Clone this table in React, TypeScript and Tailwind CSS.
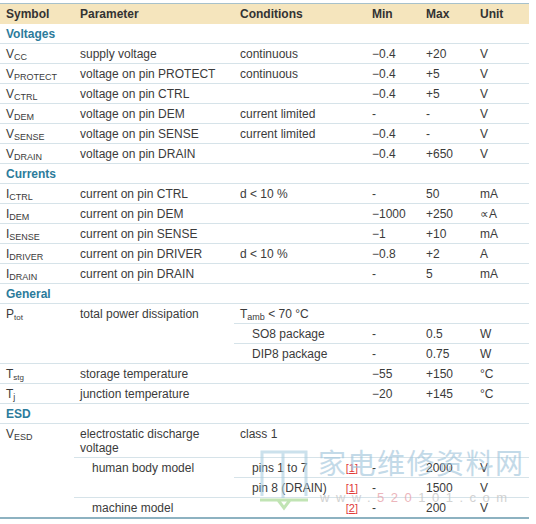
import React from "react";

type Row = {
  sym: [string, string];
  param: string;
  cond?: string;
  min: string;
  max: string;
  unit: string;
};

const cell =
  "pl-[6px] pt-[3px] pb-[2px] leading-[14px] align-top border-b border-[#d6e3e9] text-left font-normal";

const voltages: Row[] = [
  { sym: ["V", "CC"], param: "supply voltage", cond: "continuous", min: "−0.4", max: "+20", unit: "V" },
  { sym: ["V", "PROTECT"], param: "voltage on pin PROTECT", cond: "continuous", min: "−0.4", max: "+5", unit: "V" },
  { sym: ["V", "CTRL"], param: "voltage on pin CTRL", min: "−0.4", max: "+5", unit: "V" },
  { sym: ["V", "DEM"], param: "voltage on pin DEM", cond: "current limited", min: "-", max: "-", unit: "V" },
  { sym: ["V", "SENSE"], param: "voltage on pin SENSE", cond: "current limited", min: "−0.4", max: "-", unit: "V" },
  { sym: ["V", "DRAIN"], param: "voltage on pin DRAIN", min: "−0.4", max: "+650", unit: "V" },
];

const currents: Row[] = [
  { sym: ["I", "CTRL"], param: "current on pin CTRL", cond: "d < 10 %", min: "-", max: "50", unit: "mA" },
  { sym: ["I", "DEM"], param: "current on pin DEM", min: "−1000", max: "+250", unit: "∝A" },
  { sym: ["I", "SENSE"], param: "current on pin SENSE", min: "−1", max: "+10", unit: "mA" },
  { sym: ["I", "DRIVER"], param: "current on pin DRIVER", cond: "d < 10 %", min: "−0.8", max: "+2", unit: "A" },
  { sym: ["I", "DRAIN"], param: "current on pin DRAIN", min: "-", max: "5", unit: "mA" },
];

function Sym({ b, s, small }: { b: string; s: string; small?: boolean }) {
  return (
    <>
      {b}
      <sub className={small ? "text-[8px]" : "text-[9px]"}>{s}</sub>
    </>
  );
}

function Section({ title }: { title: string }) {
  return (
    <tr>
      <td colSpan={6} className={`${cell} !font-bold text-[#2c7b9b]`}>
        {title}
      </td>
    </tr>
  );
}

function DataRow({ r }: { r: Row }) {
  return (
    <tr>
      <td className={cell}>
        <Sym b={r.sym[0]} s={r.sym[1]} />
      </td>
      <td className={cell}>{r.param}</td>
      <td className={cell}>{r.cond}</td>
      <td className={cell}>{r.min}</td>
      <td className={cell}>{r.max}</td>
      <td className={cell}>{r.unit}</td>
    </tr>
  );
}

function Ref({ n }: { n: number }) {
  return <span className="text-[11px] text-[#e03a3a] underline">[{n}]</span>;
}

// site watermark stamped over the lower right corner
function Watermark() {
  return (
    <div className="pointer-events-none absolute left-[256px] top-[444px] w-[280px] h-[70px]">
      <svg width="60" height="68" viewBox="0 0 60 68" className="absolute left-0 top-0">
        <path
          d="M6 52 V8 H27 V54 M27 54 V8 H50 V52"
          fill="none"
          stroke="#a8cde0"
          strokeWidth="3"
          opacity="0.6"
        />
        <path d="M4 56 H52 M22 56 L28 64 L34 56" fill="none" stroke="#a6d894" strokeWidth="3" opacity="0.7" />
      </svg>
      <div
        className="absolute left-[62px] top-[2px] text-[28px] leading-[32px] tracking-[1.5px] text-[#9cc2d9] opacity-60"
        style={{ fontFamily: '"Noto Sans CJK SC", sans-serif' }}
      >
        家电维修资料网
      </div>
      <div className="absolute left-[64px] top-[47px] text-[13px] leading-[14px] tracking-[6.5px] text-[#c8c8c8] opacity-80">
        www.<span className="text-[#e8a4ac]">520</span>101.com
      </div>
    </div>
  );
}

export default function App() {
  return (
    <div
      className="relative w-[536px] h-[524px] bg-white pt-[3px] text-[12px] text-[#3b3b3b]"
      style={{ fontFamily: '"Liberation Sans", Arial, sans-serif' }}
    >
      <table className="w-[529px] table-fixed border-separate border-spacing-0">
        <colgroup>
          <col className="w-[74px]" />
          <col className="w-[160px]" />
          <col className="w-[132px]" />
          <col className="w-[54px]" />
          <col className="w-[54px]" />
          <col className="w-[55px]" />
        </colgroup>
        <thead>
          <tr className="bg-[#f5e5bd] text-[#333]">
            {["Symbol", "Parameter", "Conditions", "Min", "Max", "Unit"].map((h) => (
              <th
                key={h}
                className="pl-[6px] pt-[3px] pb-[3px] leading-[14px] text-left font-bold border-t border-[#a7c1cb]"
              >
                {h}
              </th>
            ))}
          </tr>
        </thead>
        <tbody>
          <Section title="Voltages" />
          {voltages.map((r) => (
            <DataRow key={r.param} r={r} />
          ))}
          <Section title="Currents" />
          {currents.map((r) => (
            <DataRow key={r.param} r={r} />
          ))}
          <Section title="General" />
          <tr>
            <td rowSpan={3} className={cell}>
              <Sym b="P" s="tot" small />
            </td>
            <td rowSpan={3} className={cell}>
              total power dissipation
            </td>
            <td colSpan={4} className={cell}>
              <Sym b="T" s="amb" /> &lt; 70 °C
            </td>
          </tr>
          <tr>
            <td className={`${cell} !pl-[18px]`}>SO8 package</td>
            <td className={cell}>-</td>
            <td className={cell}>0.5</td>
            <td className={cell}>W</td>
          </tr>
          <tr>
            <td className={`${cell} !pl-[18px]`}>DIP8 package</td>
            <td className={cell}>-</td>
            <td className={cell}>0.75</td>
            <td className={cell}>W</td>
          </tr>
          <tr>
            <td className={cell}>
              <Sym b="T" s="stg" small />
            </td>
            <td className={cell}>storage temperature</td>
            <td className={cell}></td>
            <td className={cell}>−55</td>
            <td className={cell}>+150</td>
            <td className={cell}>°C</td>
          </tr>
          <tr>
            <td className={cell}>
              <Sym b="T" s="j" />
            </td>
            <td className={cell}>junction temperature</td>
            <td className={cell}></td>
            <td className={cell}>−20</td>
            <td className={cell}>+145</td>
            <td className={cell}>°C</td>
          </tr>
          <Section title="ESD" />
          <tr>
            <td rowSpan={4} className={`${cell} !border-b-2 !border-b-[#8db2c1]`}>
              <Sym b="V" s="ESD" />
            </td>
            <td className={`${cell} pr-[20px]`}>electrostatic discharge voltage</td>
            <td colSpan={4} className={cell}>
              class 1
            </td>
          </tr>
          <tr>
            <td rowSpan={2} className={`${cell} !pl-[18px]`}>
              human body model
            </td>
            <td className={`${cell} !pl-[18px]`}>
              <div className="flex justify-between pr-[8px]">
                <span>pins 1 to 7</span>
                <Ref n={1} />
              </div>
            </td>
            <td className={cell}>-</td>
            <td className={cell}>2000</td>
            <td className={cell}>V</td>
          </tr>
          <tr>
            <td className={`${cell} !pl-[18px]`}>
              <div className="flex justify-between pr-[8px]">
                <span>pin 8 (DRAIN)</span>
                <Ref n={1} />
              </div>
            </td>
            <td className={cell}>-</td>
            <td className={cell}>1500</td>
            <td className={cell}>V</td>
          </tr>
          <tr>
            {["!pl-[18px]", "", "", "", ""].map((extra, i) => (
              <td key={i} className={`${cell} ${extra} !border-b-2 !border-b-[#8db2c1]`}>
                {i === 0 && "machine model"}
                {i === 1 && (
                  <div className="flex justify-end pr-[8px]">
                    <Ref n={2} />
                  </div>
                )}
                {i === 2 && "-"}
                {i === 3 && "200"}
                {i === 4 && "V"}
              </td>
            ))}
          </tr>
        </tbody>
      </table>
      <Watermark />
    </div>
  );
}
